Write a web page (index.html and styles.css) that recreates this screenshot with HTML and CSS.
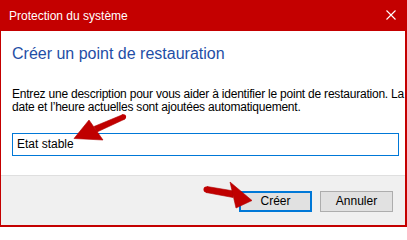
FILE: index.html
```html
<!DOCTYPE html>
<html lang="fr">
<head>
<meta charset="utf-8">
<title>Protection du système</title>
<link rel="stylesheet" href="styles.css">
</head>
<body>
<div class="window">
  <div class="titlebar">
    <span class="title">Protection du système</span>
    <svg class="close" width="10" height="10" viewBox="0 0 10 10"><path d="M0.5 0.5 L9.5 9.5 M9.5 0.5 L0.5 9.5" stroke="#fff" stroke-width="1.1" fill="none"/></svg>
  </div>
  <div class="content">
    <h1 class="heading">Créer un point de restauration</h1>
    <p class="desc">Entrez une description pour vous aider à identifier le point de restauration. La date et l’heure actuelles sont ajoutées automatiquement.</p>
    <div class="input">Etat stable</div>
  </div>
  <div class="footer">
    <div class="btn btn-default">Créer</div>
    <div class="btn">Annuler</div>
  </div>
  <svg class="arrows" width="407" height="227" viewBox="0 0 407 227">
    <g fill="#c00000" stroke="#b00000" stroke-width="0.6" stroke-linejoin="round">
      <path d="M123 114.5 L125 119 L97 132 L94 126.5 Z"/>
      <circle cx="123.5" cy="116.8" r="2.6" stroke="none"/>
      <path d="M74 138.5 L89 120 L103 140 Z"/>
      <path d="M207 186.5 L234 191 L233 197.5 L206 192.5 Z"/>
      <circle cx="206.5" cy="189.5" r="3" stroke="none"/>
      <path d="M252 200.5 L230 182 L236 208 Z"/>
    </g>
  </svg>
</div>
</body>
</html>
```
FILE: styles.css
```css
* { box-sizing: border-box; }
html, body { margin: 0; padding: 0; }
body {
  width: 407px;
  height: 227px;
  overflow: hidden;
  font-family: "Liberation Sans", Arial, sans-serif;
  font-size: 12px;
  color: #000;
  background: #fff;
}
.window {
  position: relative;
  width: 407px;
  height: 227px;
  border-left: 1px solid #c40000;
  border-right: 2px solid #c40000;
  border-bottom: 2px solid #c40000;
  display: flex;
  flex-direction: column;
  background: #fff;
}
.titlebar {
  height: 31px;
  flex: none;
  background: #c40000;
  color: #fff;
  display: flex;
  align-items: center;
  justify-content: space-between;
  margin-left: -1px;
  margin-right: -2px;
  padding-left: 9px;
  padding-right: 11px;
}
.title { font-size: 12px; line-height: 14px; }
.close { display: block; margin-top: -1px; }
.content {
  height: 144px;
  flex: none;
  padding: 13px 0 0 11px;
}
.heading {
  margin: 0;
  font-weight: normal;
  font-size: 16px;
  line-height: 20px;
  color: #1f4ea6;
}
.desc {
  margin: 24px 0 0 0;
  font-size: 12px;
  line-height: 13px;
  letter-spacing: -0.22px;
  width: 394px;
}
.input {
  margin-top: 19px;
  width: 387px;
  height: 23px;
  border: 1px solid #0078d7;
  padding-left: 4px;
  line-height: 21px;
  font-size: 12px;
}
.footer {
  flex: 1;
  background: #f0f0f0;
  border-top: 1px solid #dfdfdf;
  display: flex;
  justify-content: flex-end;
  align-items: flex-start;
  gap: 8px;
  padding: 15px 12px 0 0;
}
.btn {
  width: 73px;
  height: 21px;
  border: 1px solid #adadad;
  background: #e1e1e1;
  text-align: center;
  line-height: 19px;
  font-size: 12px;
}
.btn-default {
  border: 2px solid #0078d7;
  line-height: 17px;
}
.arrows {
  position: absolute;
  left: -1px;
  top: 0;
  pointer-events: none;
}
```
